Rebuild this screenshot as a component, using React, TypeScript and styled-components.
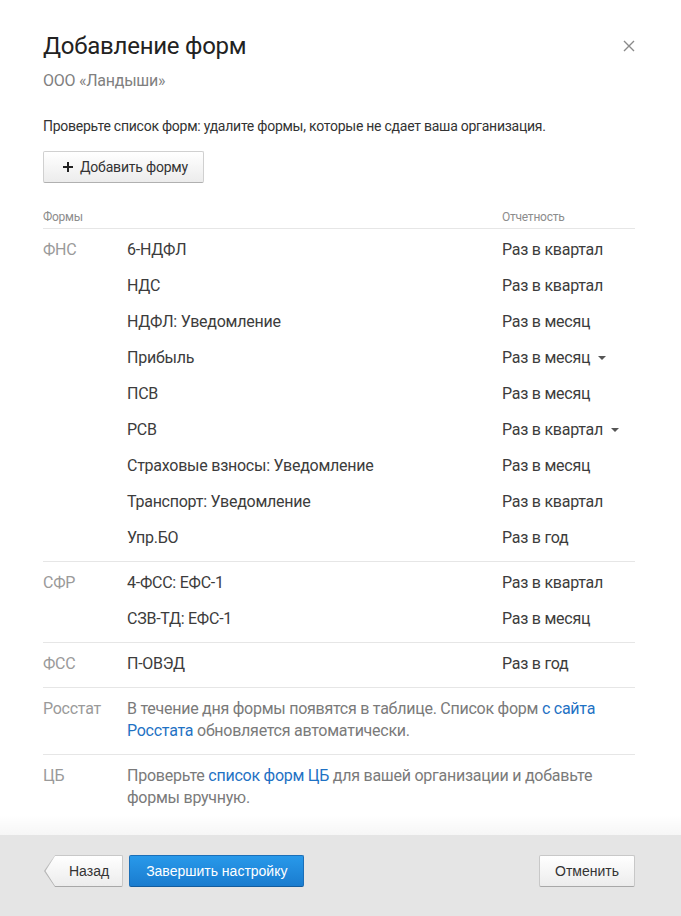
import styled, { createGlobalStyle } from 'styled-components';

const GlobalStyle = createGlobalStyle`
  body {
    margin: 0;
    background: #ffffff;
    font-family: Roboto, 'Liberation Sans', sans-serif;
    color: #333333;
  }
`;

interface FormRow {
  name: string;
  period: string;
  select?: boolean;
}

interface FormGroup {
  agency: string;
  rows: FormRow[];
}

const groups: FormGroup[] = [
  {
    agency: 'ФНС',
    rows: [
      { name: '6-НДФЛ', period: 'Раз в квартал' },
      { name: 'НДС', period: 'Раз в квартал' },
      { name: 'НДФЛ: Уведомление', period: 'Раз в месяц' },
      { name: 'Прибыль', period: 'Раз в месяц', select: true },
      { name: 'ПСВ', period: 'Раз в месяц' },
      { name: 'РСВ', period: 'Раз в квартал', select: true },
      { name: 'Страховые взносы: Уведомление', period: 'Раз в месяц' },
      { name: 'Транспорт: Уведомление', period: 'Раз в квартал' },
      { name: 'Упр.БО', period: 'Раз в год' },
    ],
  },
  {
    agency: 'СФР',
    rows: [
      { name: '4-ФСС: ЕФС-1', period: 'Раз в квартал' },
      { name: 'СЗВ-ТД: ЕФС-1', period: 'Раз в месяц' },
    ],
  },
  {
    agency: 'ФСС',
    rows: [{ name: 'П-ОВЭД', period: 'Раз в год' }],
  },
];

const App = () => {
  return (
    <>
      <GlobalStyle />
      <Modal>
        <Body>
          <Header>
            <Title>Добавление форм</Title>
            <CloseButton aria-label="Закрыть">
              <svg width="12" height="12" viewBox="0 0 12 12">
                <path d="M1 1L11 11M11 1L1 11" stroke="#8a8a8a" strokeWidth="1.4" />
              </svg>
            </CloseButton>
          </Header>
          <Subtitle>ООО «Ландыши»</Subtitle>
          <Intro>Проверьте список форм: удалите формы, которые не сдает ваша организация.</Intro>
          <AddButton>
            <svg width="10" height="10" viewBox="0 0 10 10">
              <path d="M5 0V10M0 5H10" stroke="#222" strokeWidth="2" />
            </svg>
            Добавить форму
          </AddButton>

          <Table>
            <HeadRow>
              <span>Формы</span>
              <span />
              <span>Отчетность</span>
            </HeadRow>
            {groups.map((g) => (
              <Group key={g.agency}>
                {g.rows.map((r, i) => (
                  <Row key={r.name}>
                    <Agency>{i === 0 ? g.agency : ''}</Agency>
                    <FormName>{r.name}</FormName>
                    <Period>
                      {r.period}
                      {r.select && <Caret />}
                    </Period>
                  </Row>
                ))}
              </Group>
            ))}
            <NoteGroup>
              <Agency>Росстат</Agency>
              <Note>
                В течение дня формы появятся в таблице. Список форм <Link href="#">с сайта Росстата</Link>{' '}
                обновляется автоматически.
              </Note>
            </NoteGroup>
            <NoteGroup>
              <Agency>ЦБ</Agency>
              <Note>
                Проверьте <Link href="#">список форм ЦБ</Link> для вашей организации и добавьте формы вручную.
              </Note>
            </NoteGroup>
          </Table>
        </Body>

        <Footer>
          <FooterLeft>
            <BackButton>Назад</BackButton>
            <PrimaryButton>Завершить настройку</PrimaryButton>
          </FooterLeft>
          <DefaultButton>Отменить</DefaultButton>
        </Footer>
      </Modal>
    </>
  );
};

export default App;

const Modal = styled.div`
  display: flex;
  flex-direction: column;
  height: 916px;
  overflow: hidden;
`;

const Body = styled.div`
  flex: 1;
  min-height: 0;
  padding: 30px 46px 0 43px;
  letter-spacing: -0.25px;
`;

const Header = styled.div`
  display: flex;
  justify-content: space-between;
  align-items: center;
  height: 32px;
`;

const Title = styled.h2`
  margin: 0;
  font-size: 24px;
  font-weight: 400;
  line-height: 32px;
  color: #222222;
`;

const CloseButton = styled.button`
  display: flex;
  align-items: center;
  justify-content: center;
  width: 24px;
  height: 24px;
  margin-right: -6px;
  padding: 0;
  border: none;
  background: none;
  cursor: pointer;
`;

const Subtitle = styled.div`
  margin-top: 9px;
  font-size: 16px;
  line-height: 20px;
  color: #808080;
`;

const Intro = styled.p`
  margin: 25px 0 0;
  font-size: 14px;
  line-height: 20px;
  color: #333333;
`;

const AddButton = styled.button`
  display: inline-flex;
  align-items: center;
  gap: 7px;
  margin-top: 15px;
  height: 32px;
  padding: 0 15px 0 19px;
  border: 1px solid #d0d0d0;
  border-bottom-color: #b0b0b0;
  border-radius: 2px;
  background: linear-gradient(#ffffff, #ececec);
  font-family: Roboto, 'Liberation Sans', sans-serif;
  font-size: 14px;
  letter-spacing: -0.2px;
  color: #333333;
  cursor: pointer;
`;

const Table = styled.div`
  margin-top: 23px;
`;

const grid = `
  display: grid;
  grid-template-columns: 84px 1fr 133px;
`;

const HeadRow = styled.div`
  ${grid}
  height: 22px;
  align-items: center;
  border-bottom: 1px solid #e6e6e6;
  font-size: 12px;
  color: #8c8c8c;
`;

const Group = styled.div`
  padding: 2px 0 6px;
  border-bottom: 1px solid #e6e6e6;
`;

const Row = styled.div`
  ${grid}
  height: 36px;
  align-items: center;
  font-size: 16px;
`;

const Agency = styled.div`
  font-size: 16px;
  color: #9a9a9a;
`;

const FormName = styled.div`
  color: #3c3c3c;
`;

const Period = styled.div`
  display: flex;
  align-items: center;
  color: #3c3c3c;
`;

const Caret = styled.span`
  margin-left: 8px;
  margin-top: 2px;
  width: 0;
  height: 0;
  border-left: 4px solid transparent;
  border-right: 4px solid transparent;
  border-top: 4px solid #555555;
`;

const NoteGroup = styled.div`
  display: grid;
  grid-template-columns: 84px 1fr;
  padding: 10px 0 12px;
  border-bottom: 1px solid #e6e6e6;
  line-height: 22px;

  &:last-child {
    border-bottom: none;
  }
`;

const Note = styled.div`
  font-size: 16px;
  color: #7a7a7a;
`;

const Link = styled.a`
  color: #1f72c4;
  text-decoration: none;
`;

const Footer = styled.div`
  position: relative;
  display: flex;
  flex-shrink: 0;
  justify-content: space-between;
  align-items: flex-start;
  height: 81px;
  box-sizing: border-box;
  padding: 20px 46px 0 45px;
  background: #e5e5e5;

  &::before {
    content: '';
    position: absolute;
    left: 0;
    right: 0;
    bottom: 100%;
    height: 20px;
    background: linear-gradient(rgba(0, 0, 0, 0), rgba(0, 0, 0, 0.035));
  }
`;

const FooterLeft = styled.div`
  display: flex;
  gap: 6px;
`;

const buttonBase = `
  height: 32px;
  box-sizing: border-box;
  border-radius: 2px;
  font-family: 'Liberation Sans', Arial, sans-serif;
  font-size: 14px;
  cursor: pointer;
`;

const DefaultButton = styled.button`
  ${buttonBase}
  padding: 0 15px;
  border: 1px solid #c8c8c8;
  border-bottom-color: #a8a8a8;
  background: linear-gradient(#ffffff, #ececec);
  color: #333333;
`;

const BackButton = styled.button`
  ${buttonBase}
  position: relative;
  margin-left: 10px;
  padding: 0 13px 0 14px;
  border: 1px solid #c8c8c8;
  border-left: none;
  border-bottom-color: #a8a8a8;
  border-radius: 0 2px 2px 0;
  background: linear-gradient(#ffffff, #ececec);
  color: #333333;

  &::before {
    content: '';
    position: absolute;
    top: -1px;
    left: -10px;
    width: 10px;
    height: 32px;
    background: linear-gradient(#ffffff, #ececec);
    clip-path: polygon(100% 0, 0 50%, 100% 100%);
  }

  &::after {
    content: '';
    position: absolute;
    top: -1px;
    left: -11px;
    width: 11px;
    height: 32px;
    background: linear-gradient(#c8c8c8, #a8a8a8);
    clip-path: polygon(100% 0, 0 50%, 100% 100%, 100% calc(100% - 1px), 1.5px 50%, 100% 1px);
  }
`;

const PrimaryButton = styled.button`
  ${buttonBase}
  padding: 0 16px;
  border: 1px solid #1b6fb8;
  border-bottom-color: #135c9d;
  background: linear-gradient(#2899ea, #1a7ccf);
  color: #ffffff;
`;
